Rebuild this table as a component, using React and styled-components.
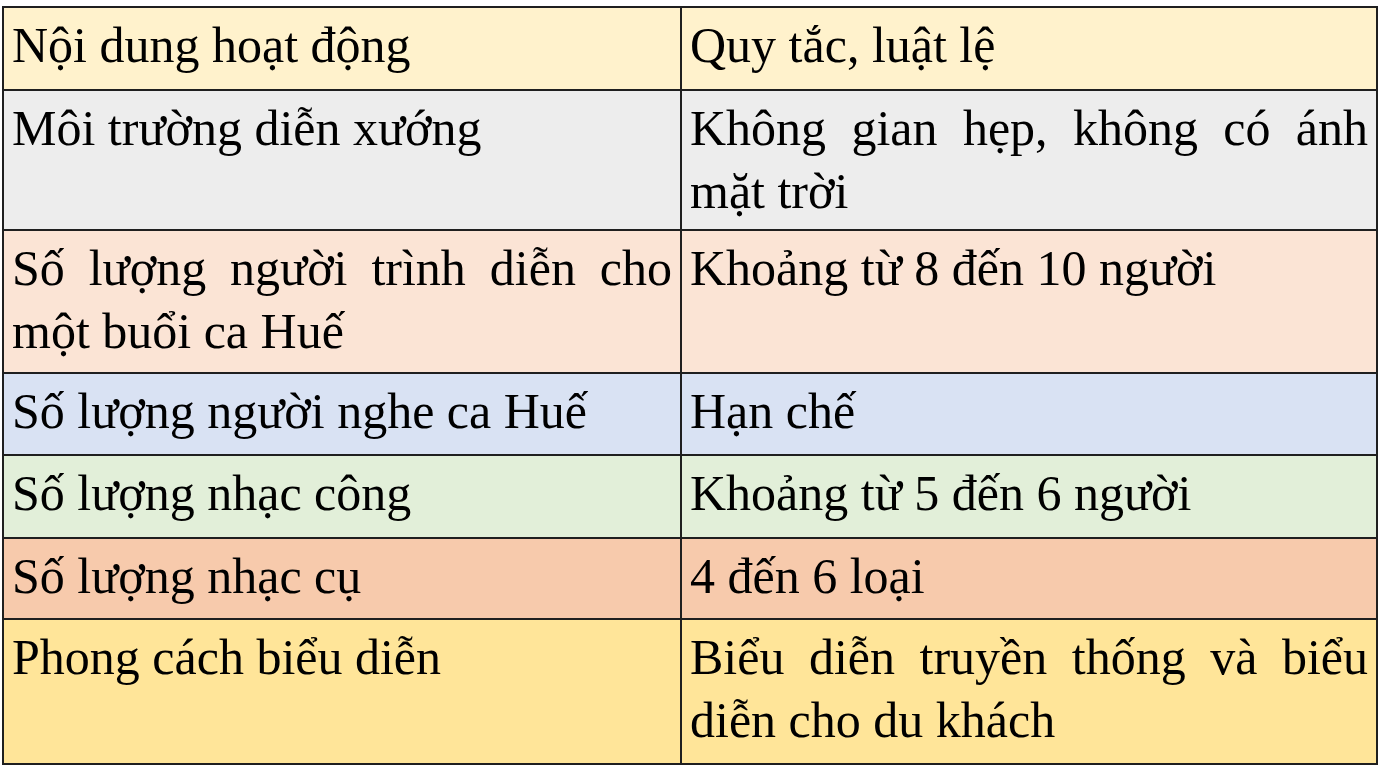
import styled, { createGlobalStyle } from 'styled-components';

const GlobalStyle = createGlobalStyle`
  html, body {
    margin: 0;
    padding: 0;
    background: #ffffff;
  }
`;

const rows = [
  { left: 'Nội dung hoạt động', right: 'Quy tắc, luật lệ', bg: '#FFF2CC', h: 83 },
  { left: 'Môi trường diễn xướng', right: 'Không gian hẹp, không có ánh mặt trời', bg: '#EDEDED', h: 139 },
  { left: 'Số lượng người trình diễn cho một buổi ca Huế', right: 'Khoảng từ 8 đến 10 người', bg: '#FBE4D5', h: 143 },
  { left: 'Số lượng người nghe ca Huế', right: 'Hạn chế', bg: '#D9E2F3', h: 82 },
  { left: 'Số lượng nhạc công', right: 'Khoảng từ 5 đến 6 người', bg: '#E2EFD9', h: 83 },
  { left: 'Số lượng nhạc cụ', right: '4 đến 6 loại', bg: '#F7CAAC', h: 81 },
  { left: 'Phong cách biểu diễn', right: 'Biểu diễn truyền thống và biểu diễn cho du khách', bg: '#FFE599', h: 145 },
];

const App = () => {
  return (
    <Page>
      <GlobalStyle />
      <Table>
        <colgroup>
          <col style={{ width: 678 }} />
          <col />
        </colgroup>
        <tbody>
          {rows.map((row) => (
            <Row key={row.left} $bg={row.bg} $h={row.h}>
              <Cell>{row.left}</Cell>
              <Cell>{row.right}</Cell>
            </Row>
          ))}
        </tbody>
      </Table>
    </Page>
  );
};

const Page = styled.div`
  padding: 6px 1px 0 2px;
`;

const Table = styled.table`
  width: 1376px;
  border-collapse: collapse;
  table-layout: fixed;
  font-family: 'Liberation Serif', 'Times New Roman', serif;
  font-size: 50px;
  color: #000;
`;

const Row = styled.tr`
  background-color: ${(p) => p.$bg};
  height: ${(p) => p.$h}px;
`;

const Cell = styled.td`
  border: 2px solid #1f1f1f;
  padding: 6px 8px 6px 8px;
  vertical-align: top;
  line-height: 63px;
  text-align: justify;
`;

export default App;
